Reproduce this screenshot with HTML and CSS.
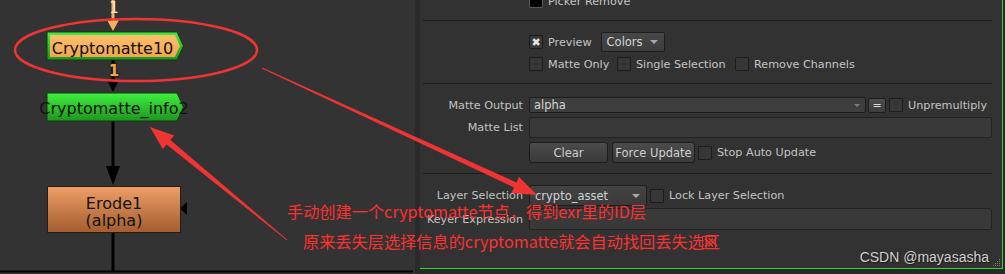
FILE: index.html
```html
<!DOCTYPE html>
<html lang="zh-CN">
<head>
    <meta charset="UTF-8">
    <title>Cryptomatte</title>
    <link rel="stylesheet" href="styles.css">
</head>
<body>
<div class="screen">
    <div class="graph">
        <svg class="graph-svg" width="415" height="274" viewBox="0 0 415 274">
            <defs>
                <linearGradient id="fillGreen" x1="0" y1="0" x2="0" y2="1">
                    <stop offset="0" stop-color="#3ff03f"/>
                    <stop offset="1" stop-color="#1c961c"/>
                </linearGradient>
                <linearGradient id="fillPeach" x1="0" y1="0" x2="0" y2="1">
                    <stop offset="0" stop-color="#fdbf6c"/>
                    <stop offset="1" stop-color="#f2a54e"/>
                </linearGradient>
                <linearGradient id="fillErode" x1="0" y1="0" x2="0" y2="1">
                    <stop offset="0" stop-color="#ee9f66"/>
                    <stop offset="1" stop-color="#a35d2f"/>
                </linearGradient>
            </defs>

            <!-- edges -->
            <line x1="113" y1="0" x2="113" y2="22" stroke="#f2b061" stroke-width="3"/>
            <polygon points="107,20 119,20 113,31" fill="#f2b061"/>
            <text x="114" y="13" class="edge-num edge-num-light">1</text>

            <line x1="113" y1="60" x2="113" y2="83" stroke="#000" stroke-width="3"/>
            <polygon points="107.5,81 118.5,81 113,92" fill="#000"/>
            <text x="114" y="76" class="edge-num">1</text>

            <line x1="113" y1="121" x2="113" y2="168" stroke="#000" stroke-width="3"/>
            <polygon points="106,166 120,166 113,185" fill="#000"/>

            <line x1="113" y1="233" x2="113" y2="272" stroke="#000" stroke-width="3"/>
            <line x1="0" y1="271.5" x2="413" y2="271.5" stroke="#000" stroke-width="2"/>
            <polygon points="180,208.5 187,202 187,215" fill="#000"/>

            <!-- nodes -->
            <polygon points="47,32 177,32 183.5,46 177,60 47,60" fill="url(#fillGreen)" stroke="#123a12"/>
            <polygon points="50,35 175,35 180,46 175,57 50,57" fill="url(#fillPeach)"/>
            <text x="112.5" y="54" class="node-name">Cryptomatte10</text>

            <polygon points="47,93 177,93 183.5,107 177,121 47,121" fill="url(#fillGreen)" stroke="#123a12"/>
            <text x="114" y="114" class="node-name">Cryptomatte_info2</text>

            <rect x="47.5" y="186.5" width="133" height="46" fill="url(#fillErode)" stroke="#2b1a0e"/>
            <text x="114" y="209" class="node-name">Erode1</text>
            <text x="114" y="226" class="node-name">(alpha)</text>
        </svg>
    </div>

    <div class="divider"></div>

    <div class="panel">
        <div class="props">
            <div class="row row-small">
                <span></span>
                <div class="controls">
                    <span class="check check-swatch"></span>
                    <span class="opt-text">Picker Remove</span>
                </div>
            </div>

            <hr class="sep sep-first">

            <div class="row row-preview">
                <span></span>
                <div class="controls">
                    <span class="check check-on">✖</span>
                    <span class="opt-text">Preview</span>
                    <span class="combo combo-colors">Colors<i class="caret"></i></span>
                </div>
            </div>

            <div class="row row-small row-options">
                <span></span>
                <div class="controls">
                    <span class="opt opt-matte"><span class="check"></span><span class="opt-text">Matte Only</span></span>
                    <span class="opt opt-single"><span class="check"></span><span class="opt-text">Single Selection</span></span>
                    <span class="opt"><span class="check"></span><span class="opt-text">Remove Channels</span></span>
                </div>
            </div>

            <hr class="sep sep-second">

            <div class="row row-output">
                <span class="label">Matte Output</span>
                <div class="controls">
                    <span class="combo combo-output">alpha<i class="caret caret-dim"></i></span>
                    <span class="eq-btn">=</span>
                    <span class="check check-tight"></span>
                    <span class="opt-text">Unpremultiply</span>
                </div>
            </div>

            <div class="row row-list">
                <span class="label">Matte List</span>
                <div class="field"></div>
            </div>

            <div class="row row-buttons">
                <span></span>
                <div class="controls">
                    <span class="btn btn-clear">Clear</span>
                    <span class="btn btn-force">Force Update</span>
                    <span class="check check-tight"></span>
                    <span class="opt-text">Stop Auto Update</span>
                </div>
            </div>

            <hr class="sep sep-third">

            <div class="row row-layer">
                <span class="label">Layer Selection</span>
                <div class="controls">
                    <span class="combo combo-layer">crypto_asset<i class="caret"></i></span>
                    <span class="check check-tight"></span>
                    <span class="opt-text">Lock Layer Selection</span>
                </div>
            </div>

            <div class="row row-keyer">
                <span class="label">Keyer Expression</span>
                <div class="field field-keyer"></div>
            </div>

            <div class="row row-icon">
                <span></span>
                <div class="controls">
                    <svg class="close-icon" width="14" height="13" viewBox="0 0 14 13">
                        <rect x="0.5" y="0.5" width="13" height="12" fill="none" stroke="#e03a3a"/>
                        <path d="M3 2.5 L11 10.5 M11 2.5 L3 10.5" stroke="#e03a3a" stroke-width="1.6"/>
                    </svg>
                </div>
            </div>
        </div>

        <div class="watermark">CSDN @mayasasha</div>
        <svg class="grip" width="9" height="9" viewBox="0 0 9 9">
            <rect x="7" y="1" width="1" height="1"/>
            <rect x="5" y="3" width="1" height="1"/><rect x="7" y="3" width="1" height="1"/>
            <rect x="3" y="5" width="1" height="1"/><rect x="5" y="5" width="1" height="1"/><rect x="7" y="5" width="1" height="1"/>
            <rect x="1" y="7" width="1" height="1"/><rect x="3" y="7" width="1" height="1"/><rect x="5" y="7" width="1" height="1"/><rect x="7" y="7" width="1" height="1"/>
        </svg>
    </div>

    <!-- red annotations drawn over the screenshot -->
    <svg class="notes" width="1005" height="274" viewBox="0 0 1005 274">
        <ellipse cx="136" cy="50" rx="121" ry="31" fill="none" stroke="#f03434" stroke-width="2.5"/>
        <polygon points="262.2,67.6 516.4,182.4 519,176.7 537,195 511.4,193.1 514,187.4 261.8,68.4" fill="#f03434"/>
        <polygon points="287.3,239.7 170.4,140 174.2,135.4 150,127 162.8,149.2 166.6,144.6 286.7,240.3" fill="#f03434"/>
    </svg>
    <div class="note note-first">手动创建一个cryptomatte节点，得到exr里的ID层</div>
    <div class="note note-second">原来丢失层选择信息的cryptomatte就会自动找回丢失选区</div>
</div>
</body>
</html>
```

FILE: styles.css
```css
* {
    margin: 0;
    padding: 0;
    box-sizing: border-box;
}

html, body {
    width: 1005px;
    height: 274px;
    overflow: hidden;
    background-color: #282828;
}

body {
    font-family: "DejaVu Sans", Verdana, sans-serif;
    font-size: 11.2px;
    color: #c4c4c4;
}

.screen {
    position: relative;
    display: flex;
    width: 1005px;
    height: 274px;
}

/* node graph */

.graph {
    flex: none;
    width: 415px;
    height: 274px;
    background-color: #333333;
}

.graph-svg {
    display: block;
}

.node-name {
    font-family: "DejaVu Sans", Verdana, sans-serif;
    font-size: 16px;
    fill: #111;
    text-anchor: middle;
}

.edge-num {
    font-family: "DejaVu Sans", Verdana, sans-serif;
    font-size: 15px;
    font-weight: bold;
    fill: #f7a447;
    stroke: #1a1a1a;
    stroke-width: 2px;
    paint-order: stroke;
    text-anchor: middle;
}

.edge-num-light {
    fill: #fbe6cb;
    stroke: none;
    font-weight: normal;
}

.divider {
    flex: none;
    width: 5px;
    background-color: #2a2a2a;
}

/* properties panel */

.panel {
    position: relative;
    flex: none;
    width: 583px;
    height: 269px;
    background-color: #323232;
    border-right: 1px solid #27e027;
    border-bottom: 1px solid #27e027;
    overflow: hidden;
}

.props {
    padding: 0 10px 0 3px;
    margin-top: -6px;
}

.row {
    display: grid;
    grid-template-columns: 100px 1fr;
    column-gap: 6px;
    align-items: center;
}

.label {
    text-align: right;
    white-space: nowrap;
    color: #c2c2c2;
}

.controls {
    display: flex;
    align-items: center;
    white-space: nowrap;
}

.sep {
    border: none;
    border-top: 1px solid #1c1c1c;
    height: 0;
}

.sep-first { margin-top: 12px; }
.sep-second { margin-top: 12px; }
.sep-third { margin-top: 10px; }

.row-small { height: 14px; }
.row-preview { height: 20px; margin-top: 11px; }
.row-options { margin-top: 5px; }
.row-output { height: 16px; margin-top: 13px; }
.row-list { height: 21px; margin-top: 4px; }
.row-buttons { height: 21px; margin-top: 4px; }
.row-layer { height: 21px; margin-top: 11px; }
.row-keyer { height: 22px; margin-top: 2px; }
.row-icon { height: 13px; margin-top: 6px; }

.check {
    flex: none;
    display: inline-flex;
    align-items: center;
    justify-content: center;
    width: 14px;
    height: 14px;
    background-color: #373737;
    border: 1px solid #1c1c1c;
    border-radius: 1px;
    color: #e2e2e2;
    font-size: 11px;
    line-height: 1;
}

.check-swatch {
    background-color: #000;
    border-color: #5a5a5a;
}

.check-tight {
    margin-left: 3px;
}

.opt-text {
    margin-left: 5px;
}

.opt {
    display: inline-flex;
    align-items: center;
}

.opt-matte { width: 88px; }
.opt-single { width: 118px; }

.combo {
    display: inline-flex;
    align-items: center;
    justify-content: space-between;
    background: linear-gradient(#474747, #3d3d3d);
    border: 1px solid #1d1d1d;
    border-radius: 2px;
    color: #d4d4d4;
}

.combo-colors {
    width: 64px;
    height: 20px;
    margin-left: 9px;
    padding: 0 6px 0 5px;
    font-size: 11.5px;
}

.combo-output {
    width: 337px;
    height: 16px;
    padding: 0 5px 0 4px;
    background: #3e3e3e;
    font-size: 11.5px;
}

.combo-layer {
    width: 118px;
    height: 21px;
    padding: 0 6px 0 5px;
    background: linear-gradient(#434343, #3a3a3a);
    font-size: 11.5px;
}

.caret {
    display: inline-block;
    width: 0;
    height: 0;
    border-left: 4px solid transparent;
    border-right: 4px solid transparent;
    border-top: 4px solid #a8a8a8;
}

.caret-dim {
    border-left-width: 3px;
    border-right-width: 3px;
    border-top: 3px solid #7a7a7a;
}

.eq-btn {
    display: inline-flex;
    align-items: center;
    justify-content: center;
    width: 18px;
    height: 15px;
    margin-left: 2px;
    background: linear-gradient(#4c4c4c, #3e3e3e);
    border: 1px solid #1d1d1d;
    border-radius: 2px;
    color: #dcdcdc;
    font-size: 11px;
}

.field {
    height: 100%;
    background-color: #393939;
    border: 1px solid #222;
    border-radius: 2px;
}

.btn {
    display: inline-flex;
    align-items: center;
    justify-content: center;
    height: 21px;
    background: linear-gradient(#4b4b4b, #3a3a3a);
    border: 1px solid #1c1c1c;
    border-radius: 3px;
    color: #cfcfcf;
    font-size: 11.5px;
}

.btn-clear { width: 79px; }
.btn-force { width: 83px; margin-left: 4px; }

.close-icon {
    display: block;
    margin-left: 173px;
}

.watermark {
    position: absolute;
    right: 13px;
    top: 249px;
    font-family: "Liberation Sans", Arial, sans-serif;
    font-size: 14px;
    line-height: 16px;
    color: #cfcfcf;
    text-shadow: 1px 1px 1px #1a1a1a;
}

.grip {
    position: absolute;
    right: 1px;
    bottom: 1px;
    fill: #7a7a7a;
}

/* annotations */

.notes {
    position: absolute;
    top: 0;
    left: 0;
    pointer-events: none;
}

.note {
    position: absolute;
    font-family: "Noto Sans CJK SC", "Noto Sans", sans-serif;
    font-size: 16.2px;
    line-height: 20px;
    color: #ff3030;
    white-space: nowrap;
}

.note-first {
    left: 287px;
    top: 201px;
}

.note-second {
    left: 303px;
    top: 231px;
}
```
